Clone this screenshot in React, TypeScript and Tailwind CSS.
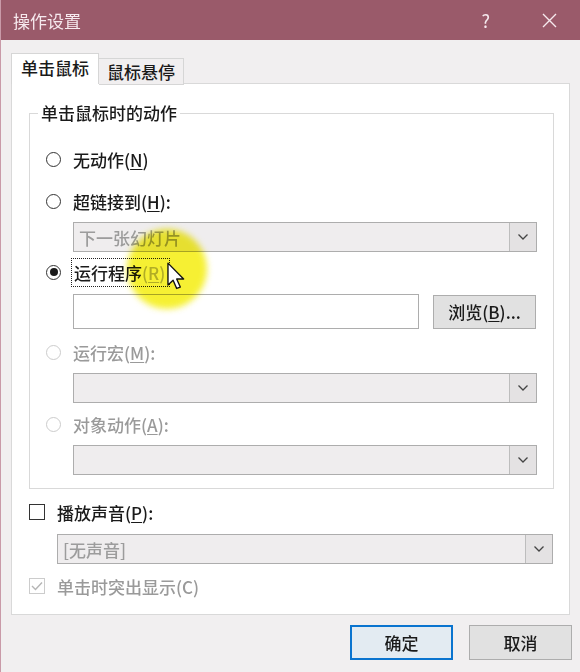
import type { ReactNode } from 'react';

const font = { fontFamily: '"Noto Sans CJK SC", "Noto Sans", sans-serif' };

function Key({ k }: { k: string }) {
  return (
    <>
      (<span className="underline underline-offset-2">{k}</span>)
    </>
  );
}

function Radio({ checked, disabled }: { checked?: boolean; disabled?: boolean }) {
  return (
    <span
      className={`flex h-[15px] w-[15px] shrink-0 items-center justify-center rounded-full border bg-white ${
        disabled ? 'border-[#cccccc]' : 'border-[#333333]'
      }`}
    >
      {checked && <span className="h-[8px] w-[8px] rounded-full bg-[#1a1a1a]" />}
    </span>
  );
}

function RadioRow({
  children,
  checked,
  disabled,
  className = '',
}: {
  children: ReactNode;
  checked?: boolean;
  disabled?: boolean;
  className?: string;
}) {
  return (
    <div className={`flex h-[28px] items-center ${className}`}>
      <Radio checked={checked} disabled={disabled} />
      <span className={`ml-[12px] ${disabled ? 'text-[#9a9a9a]' : 'text-[#1a1a1a]'}`}>{children}</span>
    </div>
  );
}

function Chevron() {
  return (
    <svg width="12" height="8" viewBox="0 0 12 8" fill="none">
      <path d="M1.5 1.5 L6 6 L10.5 1.5" stroke="#444" strokeWidth="1.3" />
    </svg>
  );
}

function Select({ text, className = '' }: { text?: string; className?: string }) {
  return (
    <div className={`flex h-[30px] items-stretch border border-[#adadad] bg-[#efedee] ${className}`}>
      <div className="flex flex-1 items-center px-[5px] text-[#9c9c9c]">{text}</div>
      <div className="flex w-[27px] items-center justify-center border-l border-[#bdbdbd] bg-[#e4e2e3]">
        <Chevron />
      </div>
    </div>
  );
}

export default function App() {
  return (
    <div
      className="relative h-[672px] w-[580px] overflow-hidden border-l border-[#c99aa8] bg-[#f1eff0] text-[17px] font-medium leading-none"
      style={font}
    >
      {/* title bar */}
      <div className="flex h-[40px] items-center bg-[#9a5a6a] pl-[12px] text-[#f6e9ee]">
        <span className="text-[17px] font-normal">操作设置</span>
        <span className="ml-auto mr-[52px] text-[18px] font-normal">?</span>
        <svg className="mr-[23px]" width="15" height="15" viewBox="0 0 15 15">
          <path d="M1 1 L14 14 M14 1 L1 14" stroke="#f6e9ee" strokeWidth="1.4" />
        </svg>
      </div>

      <div className="px-[10px] pt-[13px]">
        {/* tabs */}
        <div className="relative z-10 flex h-[31px] items-end">
          <div className="flex h-[31px] w-[88px] items-center justify-center border border-b-0 border-[#d6d6d6] bg-white pb-[3px] text-[#1a1a1a]">
            单击鼠标
          </div>
          <div className="-mb-px flex h-[27px] w-[85px] items-center justify-center border border-l-0 border-[#d6d6d6] bg-[#f1eff0] text-[#1a1a1a]">
            鼠标悬停
          </div>
        </div>

        {/* panel */}
        <div className="-mt-px h-[532px] border border-[#d9d9d9] bg-white pl-[17px] pr-[15px] pt-[29px]">
          {/* group box */}
          <div className="relative h-[376px] border border-[#d9d9d9] pl-[16px] pr-[16px] pt-[31px]">
            <span className="absolute -top-[10px] left-[8px] bg-white px-[3px] text-[#1a1a1a]">
              单击鼠标时的动作
            </span>

            <RadioRow>
              无动作<Key k="N" />
            </RadioRow>
            <RadioRow className="mt-[14px]">
              超链接到<Key k="H" />:
            </RadioRow>
            <Select text="下一张幻灯片" className="ml-[27px] mt-[7px]" />

            <div className="mt-[6px] flex h-[28px] items-center">
              <Radio checked />
              <span className="ml-[10px] flex h-[29px] items-center border border-dotted border-[#222] pl-[2px] pr-[4px] text-[#1a1a1a]">
                运行程序<span className="text-[#b8b8b8]"><Key k="R" /></span>
              </span>
            </div>
            <div className="ml-[27px] mt-[8px] flex items-center">
              <div className="h-[35px] w-[346px] border border-[#adadad] bg-white" />
              <button className="ml-[14px] flex h-[34px] w-[103px] items-center justify-center border border-[#adadad] bg-[#e1e1e1] text-[#1a1a1a]">
                浏览<Key k="B" />...
              </button>
            </div>

            <RadioRow disabled className="mt-[9px]">
              运行宏<Key k="M" />:
            </RadioRow>
            <Select className="ml-[27px] mt-[7px]" />
            <RadioRow disabled className="mt-[7px]">
              对象动作<Key k="A" />:
            </RadioRow>
            <Select className="ml-[27px] mt-[7px]" />
          </div>

          {/* sound */}
          <div className="mt-[9px] flex h-[28px] items-center">
            <span className="h-[16px] w-[16px] border border-[#333] bg-white" />
            <span className="ml-[12px] text-[#1a1a1a]">
              播放声音<Key k="P" />:
            </span>
          </div>
          <Select text="[无声音]" className="ml-[28px] mt-[8px] w-[496px]" />
          <div className="mt-[8px] flex h-[28px] items-center">
            <span className="flex h-[16px] w-[16px] items-center justify-center border border-[#cccccc] bg-white">
              <svg width="12" height="10" viewBox="0 0 12 10">
                <path d="M1 5 L4.5 8.5 L11 1.5" stroke="#b5b5b5" strokeWidth="1.4" fill="none" />
              </svg>
            </span>
            <span className="ml-[12px] text-[#9a9a9a]">单击时突出显示(C)</span>
          </div>
        </div>
      </div>

      {/* buttons */}
      <div className="mr-[8px] mt-[10px] flex justify-end gap-[16px]">
        <button className="flex h-[35px] w-[103px] items-center justify-center border-2 border-[#0a74cf] bg-[#e3ebf2] text-[#1a1a1a]">
          确定
        </button>
        <button className="flex h-[35px] w-[103px] items-center justify-center border border-[#adadad] bg-[#e1e1e1] text-[#1a1a1a]">
          取消
        </button>
      </div>

      {/* cursor highlight */}
      <div className="pointer-events-none absolute left-[126px] top-[229px] h-[80px] w-[80px] rounded-full bg-[#f5ef1c] opacity-90 mix-blend-multiply blur-[3px]" />
      <svg
        className="pointer-events-none absolute left-[166px] top-[262px]"
        width="18"
        height="28"
        viewBox="0 0 13 20"
      >
        <path
          d="M0.7 0.7 L0.7 16.5 L4.4 13 L7 19 L9.6 18 L7 12.2 L12 12.2 Z"
          fill="white"
          stroke="#111"
          strokeWidth="1"
          strokeLinejoin="round"
        />
      </svg>
    </div>
  );
}
